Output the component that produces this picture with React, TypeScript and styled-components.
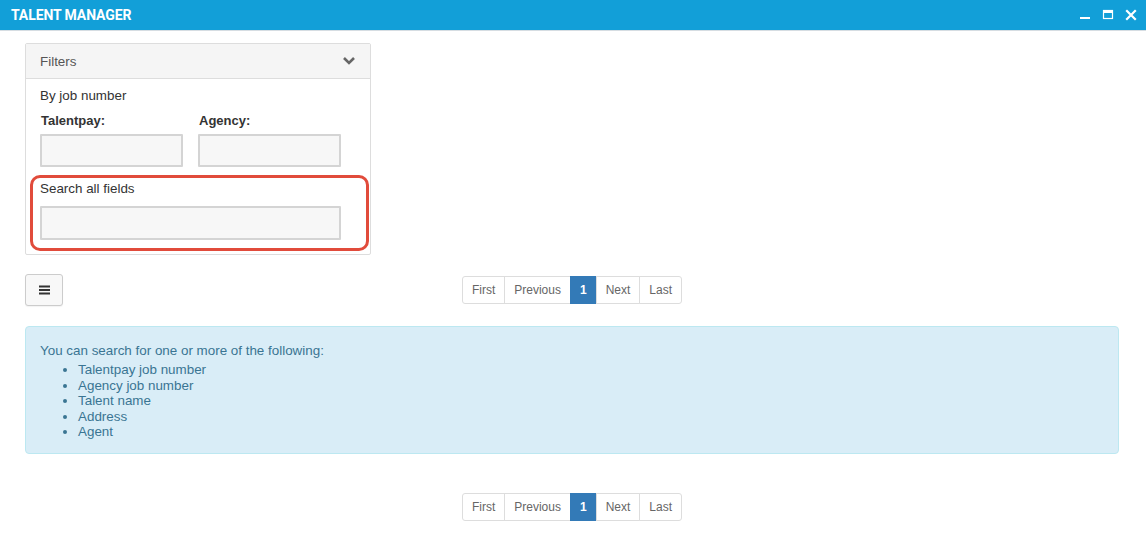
import styled, { createGlobalStyle } from "styled-components";

const GlobalStyle = createGlobalStyle`
  html, body {
    margin: 0;
    padding: 0;
    background: #fff;
  }
  body {
    font-family: "Liberation Sans", Arial, sans-serif;
    font-size: 13.4px;
    color: #333;
  }
  * {
    box-sizing: border-box;
  }
`;

const searchHints = [
  "Talentpay job number",
  "Agency job number",
  "Talent name",
  "Address",
  "Agent",
];

const pages = ["First", "Previous", "1", "Next", "Last"];

const Pagination = () => (
  <Pager>
    {pages.map((p) => (
      <PageItem key={p} $active={p === "1"}>
        {p}
      </PageItem>
    ))}
  </Pager>
);

export default function App() {
  return (
    <>
      <GlobalStyle />
      <TitleBar>
        <Title>TALENT MANAGER</Title>
        <WinControls>
          <WinBtn aria-label="minimize">
            <svg width="12" height="12" viewBox="0 0 12 12">
              <rect x="1" y="8" width="10" height="2" fill="#fff" />
            </svg>
          </WinBtn>
          <WinBtn aria-label="maximize">
            <svg width="12" height="12" viewBox="0 0 12 12">
              <rect x="1.5" y="1.5" width="9" height="8" fill="none" stroke="#fff" strokeWidth="1.2" />
              <rect x="1" y="1" width="10" height="3" fill="#fff" />
            </svg>
          </WinBtn>
          <WinBtn aria-label="close">
            <svg width="12" height="12" viewBox="0 0 12 12">
              <path d="M2 2 L10 10 M10 2 L2 10" stroke="#fff" strokeWidth="2.2" strokeLinecap="square" />
            </svg>
          </WinBtn>
        </WinControls>
      </TitleBar>

      <Content>
        <Panel>
          <PanelHeader>
            <span>Filters</span>
            <svg width="14" height="10" viewBox="0 0 14 10">
              <path d="M2 2 L7 7 L12 2" fill="none" stroke="#666" strokeWidth="2.6" />
            </svg>
          </PanelHeader>
          <PanelBody>
            <SubTitle>By job number</SubTitle>
            <FieldRow>
              <Field>
                <FieldLabel>Talentpay:</FieldLabel>
                <TextBox />
              </Field>
              <Field>
                <FieldLabel>Agency:</FieldLabel>
                <TextBox />
              </Field>
            </FieldRow>
            <Highlight>
              <PlainLabel>Search all fields</PlainLabel>
              <TextBox $wide />
            </Highlight>
          </PanelBody>
        </Panel>

        <Toolbar>
          <MenuBtn aria-label="columns">
            <svg width="11" height="10" viewBox="0 0 11 10">
              <rect x="0" y="0.5" width="11" height="2" fill="#333" />
              <rect x="0" y="4" width="11" height="2" fill="#333" />
              <rect x="0" y="7.5" width="11" height="2" fill="#333" />
            </svg>
          </MenuBtn>
          <Pagination />
          <span />
        </Toolbar>

        <InfoBox>
          <p>You can search for one or more of the following:</p>
          <ul>
            {searchHints.map((h) => (
              <li key={h}>{h}</li>
            ))}
          </ul>
        </InfoBox>

        <BottomPager>
          <Pagination />
        </BottomPager>
      </Content>
    </>
  );
}

const TitleBar = styled.header`
  height: 31px;
  background: #129fd8;
  border-bottom: 1px solid #d6dde2;
  display: flex;
  align-items: center;
  justify-content: space-between;
  padding: 0 9px 0 11px;
`;

const Title = styled.h1`
  margin: 0;
  font-family: Roboto, "Liberation Sans", sans-serif;
  font-weight: 700;
  font-size: 14px;
  color: #fff;
  letter-spacing: -0.1px;
`;

const WinControls = styled.div`
  display: flex;
  gap: 11px;
  align-items: center;
`;

const WinBtn = styled.span`
  display: inline-flex;
  width: 12px;
  height: 12px;
`;

const Content = styled.main`
  padding: 12px 27px 20px 25px;
`;

const Panel = styled.section`
  width: 346px;
  border: 1px solid #ddd;
  border-radius: 2px;
  background: #fff;
`;

const PanelHeader = styled.div`
  height: 35px;
  background: #f5f5f5;
  border-bottom: 1px solid #ddd;
  display: flex;
  align-items: center;
  justify-content: space-between;
  padding: 0 14px 0 14px;
  color: #555;
`;

const PanelBody = styled.div`
  padding: 9px 2px 3px 4px;
`;

const SubTitle = styled.div`
  padding-left: 10px;
  color: #333;
  line-height: 16px;
`;

const FieldRow = styled.div`
  display: flex;
  gap: 15px;
  padding-left: 10px;
  margin-top: 9px;
`;

const Field = styled.div`
  display: flex;
  flex-direction: column;
`;

const FieldLabel = styled.label`
  font-weight: 700;
  font-size: 13px;
  line-height: 16px;
  padding-left: 1px;
  margin-bottom: 5px;
`;

const PlainLabel = styled.label`
  line-height: 16px;
  margin-bottom: 9px;
`;

const TextBox = styled.input<{ $wide?: boolean }>`
  width: ${(p) => (p.$wide ? "301px" : "143px")};
  height: ${(p) => (p.$wide ? "34px" : "33px")};
  border: 2px solid #d4d4d4;
  background: #f7f7f7;
  border-radius: 1px;
  outline: none;
`;

const Highlight = styled.div`
  margin-top: 8px;
  border: 3px solid #e14b3b;
  border-radius: 10px;
  width: 339px;
  padding: 3px 0 8px 7px;
  display: flex;
  flex-direction: column;
`;

const Toolbar = styled.div`
  display: grid;
  grid-template-columns: 1fr auto 1fr;
  align-items: center;
  margin-top: 19px;
`;

const MenuBtn = styled.button`
  width: 38px;
  height: 32px;
  border: 1px solid #ccc;
  border-radius: 3px;
  background: #f8f8f8;
  display: flex;
  align-items: center;
  justify-content: center;
  padding: 0;
  box-shadow: 0 1px 1px rgba(0, 0, 0, 0.05);
`;

const Pager = styled.nav`
  display: flex;
`;

const PageItem = styled.span<{ $active?: boolean }>`
  height: 28px;
  padding: 0 9px;
  display: flex;
  align-items: center;
  font-size: 12px;
  border: 1px solid ${(p) => (p.$active ? "#337ab7" : "#ddd")};
  margin-left: -1px;
  background: ${(p) => (p.$active ? "#337ab7" : "#fff")};
  color: ${(p) => (p.$active ? "#fff" : "#666")};
  font-weight: ${(p) => (p.$active ? 700 : 400)};

  &:first-child {
    margin-left: 0;
    border-radius: 3px 0 0 3px;
  }
  &:last-child {
    border-radius: 0 3px 3px 0;
  }
`;

const InfoBox = styled.div`
  margin-top: 20px;
  background: #d9edf7;
  border: 1px solid #bce8f1;
  border-radius: 4px;
  color: #3a7593;
  padding: 16px 14px 14px;
  line-height: 15.4px;

  p {
    margin: 0 0 4px;
  }
  ul {
    margin: 0;
    padding-left: 38px;
  }
`;

const BottomPager = styled.div`
  display: flex;
  justify-content: center;
  margin-top: 39px;
`;
